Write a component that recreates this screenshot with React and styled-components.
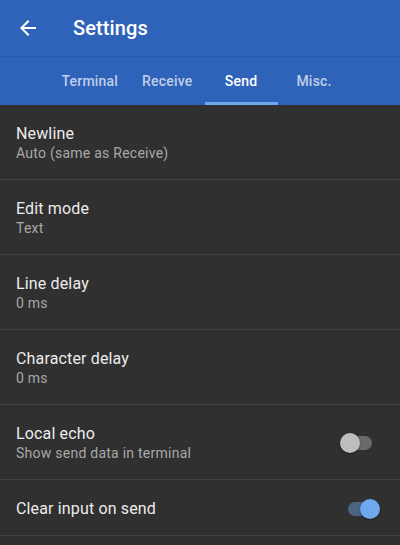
import styled, { createGlobalStyle } from 'styled-components';

const GlobalStyle = createGlobalStyle`
  body {
    margin: 0;
    background: #303030;
    font-family: Roboto, "Liberation Sans", sans-serif;
  }
`

const Screen = styled.div`
  width: 400px;
  height: 545px;
  overflow: hidden;
  background: #303030;
`

const Header = styled.header`
  background: #2f63ba;
`

const Toolbar = styled.div`
  height: 57px;
  display: flex;
  align-items: center;
  padding-left: 16px;
  border-bottom: 1px solid #2a59a8;
  box-sizing: border-box;

  svg {
    width: 24px;
    height: 24px;
    fill: #fff;
  }
`

const Title = styled.h1`
  margin: 0 0 0 33px;
  font-size: 20px;
  font-weight: 500;
  color: #fff;
  letter-spacing: 0.1px;
`

const Tabs = styled.nav`
  height: 48px;
  display: flex;
  justify-content: center;
`

const Tab = styled.div`
  min-width: 73px;
  padding: 3px 12px 0;
  box-sizing: border-box;
  display: flex;
  align-items: center;
  justify-content: center;
  font-size: 14px;
  font-weight: 500;
  letter-spacing: 0.2px;
  color: ${({ active }) => active ? '#fff' : 'rgba(255, 255, 255, 0.7)'};
  border-bottom: 3px solid ${({ active }) => active ? '#6ea8ee' : 'transparent'};
`

const Row = styled.div`
  padding: 19px 28px 17px 16px;
  display: flex;
  align-items: center;
  justify-content: space-between;
  border-bottom: 1px solid #424242;
`

const Text = styled.div`
  display: flex;
  flex-direction: column;
  gap: 2px;
`

const Label = styled.div`
  font-size: 16px;
  line-height: 19px;
  letter-spacing: 0.15px;
  color: #ececec;
`

const Summary = styled.div`
  font-size: 14px;
  line-height: 17px;
  letter-spacing: 0.25px;
  color: #a8a8a8;
`

const Switch = styled.div`
  position: relative;
  width: 24px;
  height: 14px;
  border-radius: 7px;
  background: ${({ on }) => on ? '#4a6584' : '#6a6a6a'};

  &::after {
    content: '';
    position: absolute;
    top: -3px;
    left: ${({ on }) => on ? '12px' : '-8px'};
    width: 20px;
    height: 20px;
    border-radius: 50%;
    background: ${({ on }) => on ? '#6ea8ee' : '#bdbdbd'};
    box-shadow: 0 1px 2px rgba(0, 0, 0, 0.4);
  }
`

const tabs = ['Terminal', 'Receive', 'Send', 'Misc.'];

const settings = [
  { label: 'Newline', summary: 'Auto (same as Receive)' },
  { label: 'Edit mode', summary: 'Text' },
  { label: 'Line delay', summary: '0 ms' },
  { label: 'Character delay', summary: '0 ms' },
  { label: 'Local echo', summary: 'Show send data in terminal', toggle: false },
  { label: 'Clear input on send', toggle: true },
];

export default function App() {
  return (<Screen>
    <GlobalStyle />
    <Header>
      <Toolbar>
        <svg viewBox="0 0 24 24"><path d="M20 11H7.83l5.59-5.59L12 4l-8 8 8 8 1.41-1.41L7.83 13H20v-2z" /></svg>
        <Title>Settings</Title>
      </Toolbar>
      <Tabs>
        {tabs.map(t => <Tab key={t} active={t === 'Send'}>{t}</Tab>)}
      </Tabs>
    </Header>
    {settings.map(s => (
      <Row key={s.label}>
        <Text>
          <Label>{s.label}</Label>
          {s.summary && <Summary>{s.summary}</Summary>}
        </Text>
        {s.toggle !== undefined && <Switch on={s.toggle} />}
      </Row>
    ))}
  </Screen>)
}
